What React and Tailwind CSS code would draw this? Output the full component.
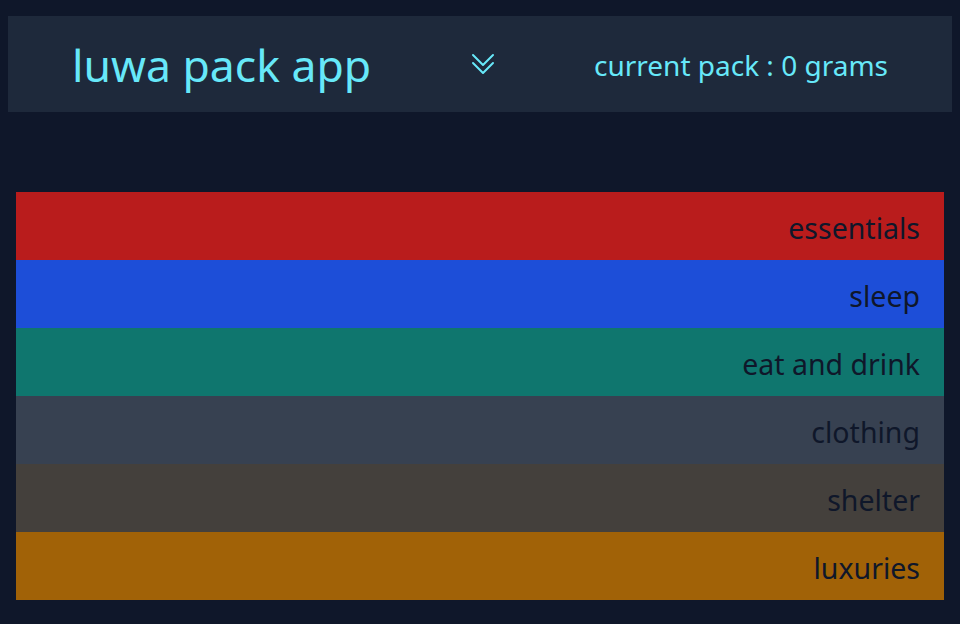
const categories = [
  { name: "essentials", color: "bg-[#b91c1c]" },
  { name: "sleep", color: "bg-[#1d4ed8]" },
  { name: "eat and drink", color: "bg-[#0f766e]" },
  { name: "clothing", color: "bg-[#374151]" },
  { name: "shelter", color: "bg-[#44403c]" },
  { name: "luxuries", color: "bg-[#a16207]" },
];

const ChevronDoubleDown = () => (
  <svg
    xmlns="http://www.w3.org/2000/svg"
    viewBox="0 0 24 24"
    fill="none"
    stroke="currentColor"
    strokeWidth={1.5}
    strokeLinecap="round"
    strokeLinejoin="round"
    className="h-8 w-8"
  >
    <path d="m4.5 5.25 7.5 7.5 7.5-7.5m-15 6 7.5 7.5 7.5-7.5" />
  </svg>
);

export default function App() {
  return (
    <div
      className="min-h-[624px] bg-[#0f172a] px-2 pt-4 pb-6"
      style={{ fontFamily: '"Noto Sans", "Open Sans", sans-serif' }}
    >
      <header className="flex items-center justify-between bg-[#1e293b] px-16 py-6 text-[#67e8f9]">
        <h1 className="pt-[2px] text-[44.5px] leading-[46px] font-normal">luwa pack app</h1>
        <button className="cursor-pointer">
          <ChevronDoubleDown />
        </button>
        <p className="pt-[2px] text-[28px]">current pack : 0 grams</p>
      </header>

      <div className="mx-2 mt-20 flex flex-col">
        {categories.map((cat) => (
          <div
            key={cat.name}
            className={`${cat.color} pt-[18px] pb-[14px] pr-6 text-right text-[28.5px] leading-9 text-[#0f172a]`}
          >
            {cat.name}
          </div>
        ))}
      </div>
    </div>
  );
}
